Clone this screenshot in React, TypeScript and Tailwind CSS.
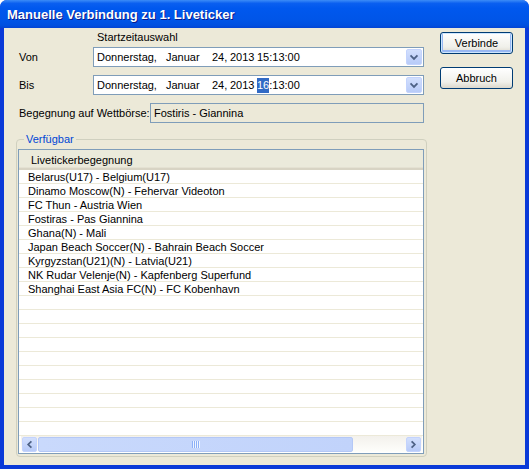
import React from 'react';

const matches = [
  'Belarus(U17) - Belgium(U17)',
  'Dinamo Moscow(N) - Fehervar Videoton',
  'FC Thun - Austria Wien',
  'Fostiras - Pas Giannina',
  'Ghana(N) - Mali',
  'Japan Beach Soccer(N) - Bahrain Beach Soccer',
  'Kyrgyzstan(U21)(N) - Latvia(U21)',
  'NK Rudar Velenje(N) - Kapfenberg Superfund',
  'Shanghai East Asia FC(N) - FC Kobenhavn',
];

// sichtbare Zeilen in der Liste
const ROW_COUNT = 19;

const Chevron = ({ dir }: { dir: 'down' | 'left' | 'right' }) => {
  const pts =
    dir === 'down' ? '4.5,6 7.5,9 10.5,6' : dir === 'left' ? '9,4.5 6,7.5 9,10.5' : '6,4.5 9,7.5 6,10.5';
  return (
    <svg width="15" height="15" viewBox="0 0 15 15">
      <polyline points={pts} fill="none" stroke="#4d6185" strokeWidth="2" strokeLinecap="square" />
    </svg>
  );
};

const ArrowBox = ({ dir, className = '' }: { dir: 'down' | 'left' | 'right'; className?: string }) => (
  <div
    className={`flex items-center justify-center rounded-[2px] border border-[#c3d3fd] bg-[linear-gradient(to_bottom,#d2dffd,#b8cbf8)] ${className}`}
  >
    <Chevron dir={dir} />
  </div>
);

const DatePicker = ({ highlight }: { highlight?: boolean }) => (
  <div className="w-[331px] h-[20px] border border-[#7f9db9] bg-white flex items-center pl-[3px]">
    <span className="inline-block w-[69px]">Donnerstag,</span>
    <span className="inline-block w-[46px]">Januar</span>
    <span className="inline-block w-[18px]">24,</span>
    <span className="inline-block w-[27px]">2013</span>
    {highlight ? (
      <span>
        <span className="inline-block leading-[15px] bg-[#316ac5] text-white">16</span>:13:00
      </span>
    ) : (
      <span>15:13:00</span>
    )}
    <ArrowBox dir="down" className="ml-auto mr-[1px] w-[16px] h-[16px]" />
  </div>
);

const XpButton = ({ label, isDefault }: { label: string; isDefault?: boolean }) => (
  <button
    className={`w-[73px] h-[22px] rounded-[3px] border border-[#003c74] bg-[linear-gradient(to_bottom,#ffffff,#f0f0ea_70%,#dcd8cc)] flex items-center justify-center ${
      isDefault ? 'shadow-[inset_0_0_0_1px_#cee7ff,inset_0_-1px_0_2px_#98b8f3]' : ''
    }`}
  >
    {label}
  </button>
);

export default function App() {
  return (
    <div className="w-[529px] h-[469px] flex flex-col bg-[#0a3ad8] rounded-t-[7px] overflow-hidden font-['Liberation_Sans',Arial,sans-serif] text-[11px] text-black">
      {/* Titelleiste */}
      <div className="h-[28px] shrink-0 flex items-center pl-[7px] pt-[1px] bg-[linear-gradient(to_bottom,#3c8cf7,#0a5ff0_12%,#0058ee_30%,#0055e8_70%,#0050e0_90%,#0344d4)]">
        <span className="text-[13px] font-bold text-white [text-shadow:1px_1px_#0a1a8a]">
          Manuelle Verbindung zu 1. Liveticker
        </span>
      </div>

      <div className="flex-1 mx-[4px] mb-[4px] bg-[#ece9d8] flex">
        {/* linke Spalte */}
        <div className="w-[436px] flex flex-col">
          <div className="pl-[93px] pt-[3px] leading-[13px]">Startzeitauswahl</div>

          <div className="mt-[3px] h-[20px] flex items-center">
            <span className="w-[89px] pl-[15px]">Von</span>
            <DatePicker />
          </div>

          <div className="mt-[8px] h-[20px] flex items-center">
            <span className="w-[89px] pl-[15px]">Bis</span>
            <DatePicker highlight />
          </div>

          <div className="mt-[8px] h-[20px] flex items-center">
            <span className="w-[146px] pl-[15px]">Begegnung auf Wettbörse:</span>
            <div className="w-[274px] h-[20px] border border-[#7f9db9] flex items-center pl-[3px]">
              Fostiris - Giannina
            </div>
          </div>

          <fieldset className="mt-[10px] ml-[12px] w-[411px] border border-[#d0d0bf] rounded-[4px] px-[1px] pb-[2px]">
            <legend className="ml-[6px] px-[2px] text-[#0046d5] leading-[13px]">Verfügbar</legend>

            <div className="w-[406px] h-[305px] mt-[3px] border border-[#7f9db9] bg-white flex flex-col">
              <div className="h-[20px] shrink-0 flex items-center pl-[12px] pt-[2px] bg-[#ebeadb] border-b-[2px] border-[#d8d4c4] shadow-[inset_0_-1px_0_#e4e1d2]">
                Livetickerbegegnung
              </div>
              {Array.from({ length: ROW_COUNT }).map((_, i) => (
                <div key={i} className="h-[14px] shrink-0 border-b border-[#ece9d8] pl-[9px] pt-[1px] leading-[12px] whitespace-nowrap">
                  {matches[i] ?? ''}
                </div>
              ))}
              <div className="h-[16px] shrink-0 ml-[2px] mr-[1px] flex items-center px-[1px] bg-[linear-gradient(to_bottom,#f3f1ec,#fefefb)]">
                <ArrowBox dir="left" className="w-[15px] h-[15px]" />
                <div className="ml-[1px] w-[315px] h-[15px] rounded-[2px] border border-[#b4c8f6] bg-[linear-gradient(to_right,#c9d9fc,#c1d3fb)] flex items-center justify-center gap-[1px]">
                  {[0, 1, 2, 3].map((g) => (
                    <span key={g} className="w-[1px] h-[7px] bg-[#8cb0f8] shadow-[1px_0_0_#eef4fe]" />
                  ))}
                </div>
                <ArrowBox dir="right" className="ml-auto w-[15px] h-[15px]" />
              </div>
            </div>
          </fieldset>
        </div>

        {/* Buttons */}
        <div className="flex flex-col pt-[4px] gap-[13px]">
          <XpButton label="Verbinde" isDefault />
          <XpButton label="Abbruch" />
        </div>
      </div>
    </div>
  );
}
